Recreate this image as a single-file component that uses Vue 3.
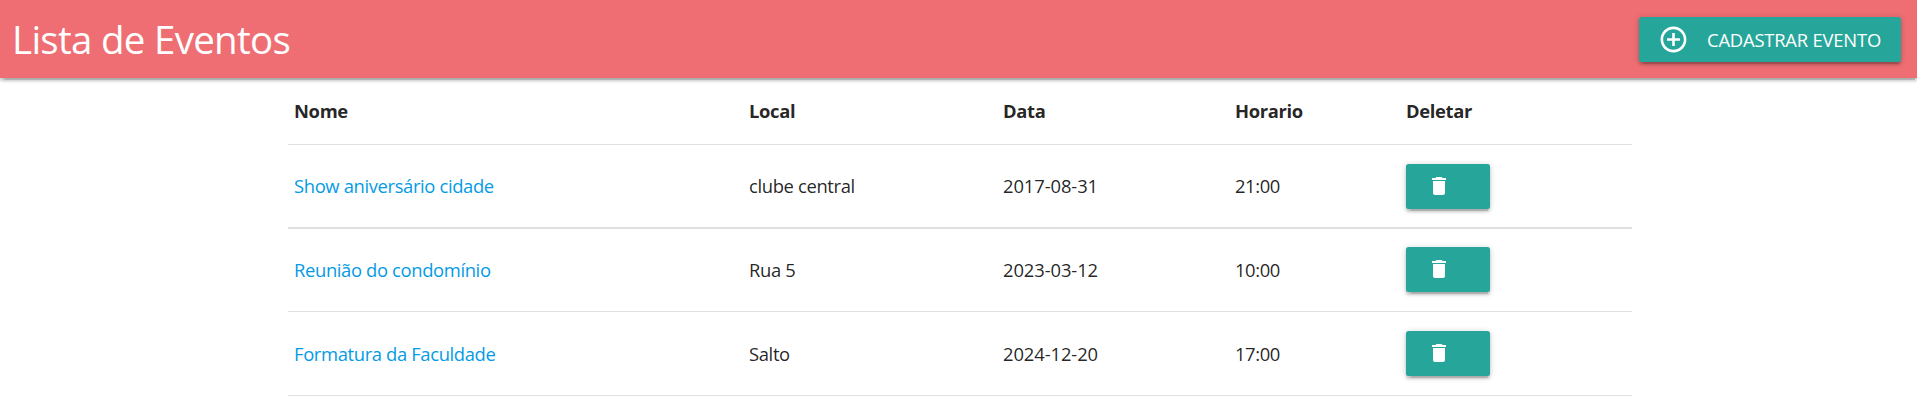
<script setup>
const events = [
  { name: 'Show aniversário cidade', place: 'clube central', date: '2017-08-31', time: '21:00' },
  { name: 'Reunião do condomínio', place: 'Rua 5', date: '2023-03-12', time: '10:00' },
  { name: 'Formatura da Faculdade', place: 'Salto', date: '2024-12-20', time: '17:00' },
]
</script>

<template>
  <div class="page">
    <nav class="navbar">
      <a class="brand">Lista de Eventos</a>
      <a class="btn create">
        <svg class="plus" viewBox="0 0 24 24"><path d="M13 7h-2v4H7v2h4v4h2v-4h4v-2h-4V7zm-1-5C6.480 2 2 6.480 2 12s4.480 10 10 10 10-4.480 10-10S17.520 2 12 2zm0 18c-4.410 0-8-3.590-8-8s3.590-8 8-8 8 3.590 8 8-3.590 8-8 8z" /></svg>
        <span>CADASTRAR EVENTO</span>
      </a>
    </nav>
    <main class="table">
      <div class="row head">
        <span>Nome</span><span>Local</span><span>Data</span><span>Horario</span><span>Deletar</span>
      </div>
      <div v-for="e in events" :key="e.name" class="row item">
        <a class="link">{{ e.name }}</a>
        <span class="place">{{ e.place }}</span>
        <span class="date">{{ e.date }}</span>
        <span class="time">{{ e.time }}</span>
        <button class="btn delete" aria-label="Deletar">
          <svg class="trash" viewBox="0 0 24 24"><path d="M6 19c0 1.100.9 2 2 2h8c1.100 0 2-.9 2-2V7H6v12zM19 4h-3.500l-1-1h-5l-1 1H5v2h14V4z" /></svg>
        </button>
      </div>
    </main>
  </div>
</template>

<style>
body { margin: 0; background: #fff; }
</style>

<style scoped>
.page {
  height: 417px;
  overflow: hidden;
  font-family: "Open Sans", "Noto Sans", sans-serif;
  font-size: 18.4px;
  color: rgba(0, 0, 0, 0.87);
}
.navbar {
  box-sizing: border-box;
  height: 78px;
  padding: 0 16px 0 12px;
  display: flex;
  align-items: center;
  justify-content: space-between;
  background: #ee6e73;
  box-shadow: 0 2.5px 2.5px 0 rgba(0, 0, 0, 0.14), 0 4px 1px -2.5px rgba(0, 0, 0, 0.12), 0 1px 6px 0 rgba(0, 0, 0, 0.2);
}
.brand {
  color: #fff;
  font-size: 38.5px;
  line-height: 78px;
  font-weight: 400;
  letter-spacing: -0.72px;
}
.btn {
  box-sizing: border-box;
  height: 45px;
  border: 0;
  border-radius: 2.5px;
  background: #26a69a;
  color: #fff;
  display: flex;
  align-items: center;
  box-shadow: 0 2.5px 2.5px 0 rgba(0, 0, 0, 0.14), 0 4px 1px -2.5px rgba(0, 0, 0, 0.12), 0 1px 6px 0 rgba(0, 0, 0, 0.2);
}
.btn svg { fill: currentColor; flex: none; }
.create {
  width: 262px;
  padding-left: 19px;
  white-space: nowrap;
  line-height: 45px;
  margin-top: 1px;
  letter-spacing: -0.2px;
}
.plus { width: 31px; height: 31px; margin-right: 18px; margin-top: -1px; }
.table { width: 1344px; margin-left: 288px; }
.row {
  box-sizing: border-box;
  display: grid;
  grid-template-columns: 455px 254px 232px 171px 220px;
  align-items: center;
  padding-left: 6px;
  border-bottom: 1px solid #e0e0e0;
  white-space: nowrap;
}
.row > span, .link { padding-bottom: 2px; }
.head { height: 67px; font-weight: 700; letter-spacing: -0.35px; }
.item { height: 84px; font-weight: 400; }
.item:nth-child(2) { border-bottom-width: 2px; }
.item:nth-child(3) { height: 83px; padding-bottom: 1px; }
.item:nth-child(n + 3) > span, .item:nth-child(n + 3) > .link { padding-bottom: 0; }
.link { color: #039be5; letter-spacing: -0.36px; }
.place { letter-spacing: -0.35px; }
.date { letter-spacing: -0.1px; }
.time { letter-spacing: -0.4px; }
.delete { width: 84px; padding: 0 0 0 20.5px; }
.trash { width: 24px; height: 24px; margin-top: -1px; }
</style>
